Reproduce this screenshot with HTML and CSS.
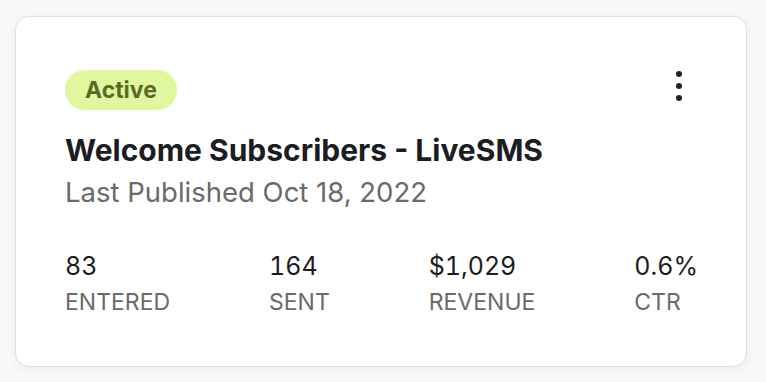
FILE: index.html
```html
<!DOCTYPE html>
<html lang="en">
<head>
    <meta charset="UTF-8">
    <meta name="viewport" content="width=device-width, initial-scale=1.0">
    <title>Journey Card</title>
    <link rel="stylesheet" href="styles.css">
</head>
<body>
    <div class="card">
        <div class="card-header">
            <span class="badge">Active</span>
            <button class="menu-btn" aria-label="More options">
                <svg width="8" height="32" viewBox="0 0 8 32">
                    <circle cx="4" cy="4" r="3" fill="#1d1f24"/>
                    <circle cx="4" cy="16" r="3" fill="#1d1f24"/>
                    <circle cx="4" cy="28" r="3" fill="#1d1f24"/>
                </svg>
            </button>
        </div>
        <h2 class="title">Welcome Subscribers - LiveSMS</h2>
        <div class="subtitle">Last Published Oct 18, 2022</div>
        <div class="stats">
            <div class="stat">
                <div class="stat-value">83</div>
                <div class="stat-label">Entered</div>
            </div>
            <div class="stat">
                <div class="stat-value">164</div>
                <div class="stat-label">Sent</div>
            </div>
            <div class="stat">
                <div class="stat-value">$1,029</div>
                <div class="stat-label">Revenue</div>
            </div>
            <div class="stat">
                <div class="stat-value">0.6%</div>
                <div class="stat-label">CTR</div>
            </div>
        </div>
    </div>
</body>
</html>
```

FILE: styles.css
```css
body {
    font-family: Inter, "Noto Sans", sans-serif;
    margin: 0;
    padding: 16px 19px 15px 15px;
    background-color: #f8f8f8;
}
.card {
    height: 351px;
    box-sizing: border-box;
    background-color: #fff;
    border: 1px solid #e0e0e0;
    border-radius: 14px;
    box-shadow: 0 2px 10px rgba(0, 0, 0, 0.05);
    padding: 53px 48px 0 49px;
}
.card-header {
    display: flex;
    justify-content: space-between;
    align-items: flex-start;
}
.badge {
    display: inline-block;
    height: 40px;
    line-height: 40px;
    padding: 0 20px;
    border-radius: 20px;
    background-color: #e1f79d;
    color: #5a6a2b;
    font-size: 23px;
    font-weight: 700;
}
.menu-btn {
    border: none;
    background: none;
    padding: 0;
    margin-right: 15px;
    cursor: pointer;
    display: flex;
}
.title {
    margin: 22px 0 0;
    font-size: 30px;
    line-height: 36px;
    font-weight: 700;
    color: #1b1d22;
}
.subtitle {
    margin-top: 7px;
    font-size: 27.5px;
    line-height: 34px;
    color: #6a6a6a;
}
.stats {
    display: flex;
    justify-content: space-between;
    margin-top: 42px;
}
.stat-value {
    font-size: 25px;
    line-height: 30px;
    color: #1b1d22;
    font-variant-numeric: tabular-nums;
}
.stat-label {
    margin-top: 6px;
    font-size: 23px;
    line-height: 30px;
    color: #6a6a6a;
    text-transform: uppercase;
}
```
